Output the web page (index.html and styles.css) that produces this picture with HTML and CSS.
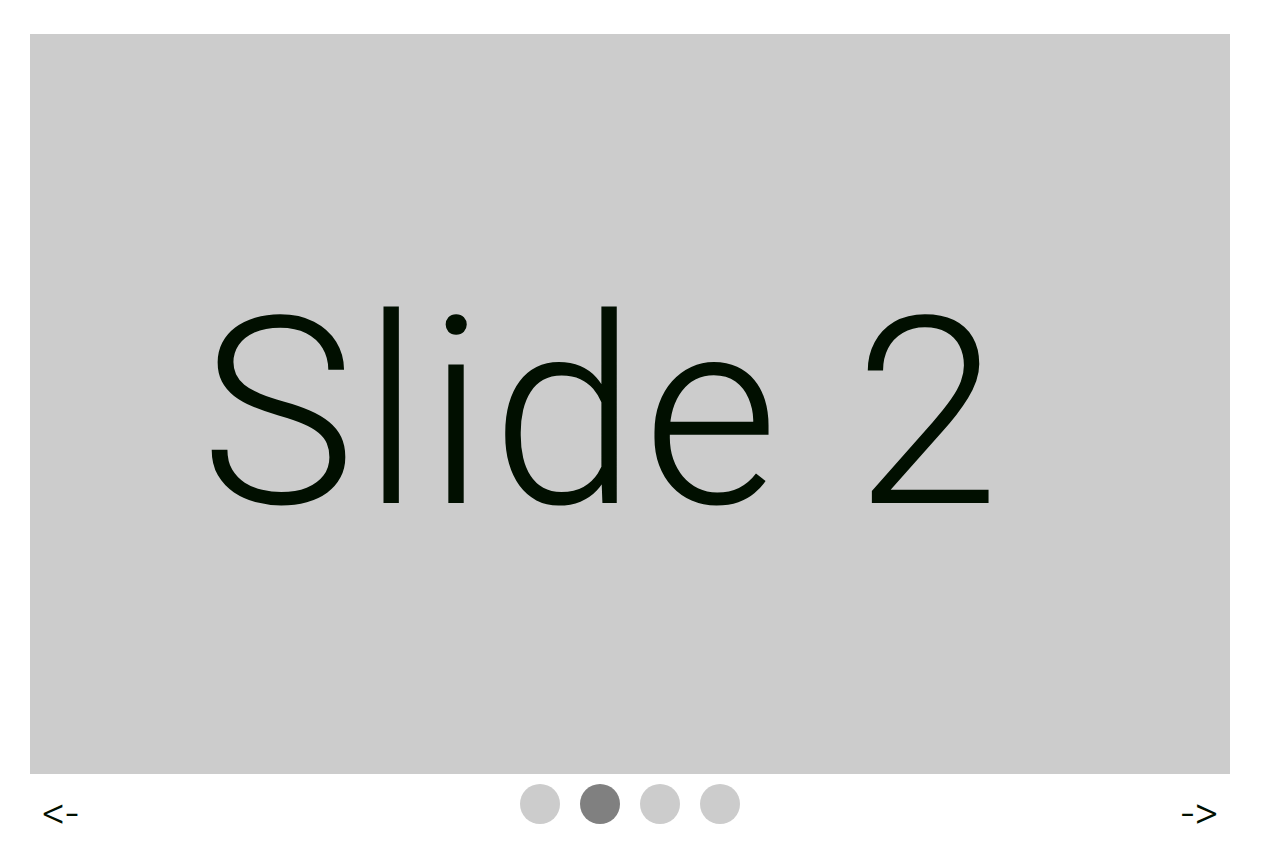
FILE: index.html
```html
<!DOCTYPE html>
<html>
<head>
<meta charset="utf-8">
<link rel="stylesheet" href="styles.css">
</head>
<body>
<div class="carousel">
  <div class="slide"><span class="slide-text">Slide 2</span></div>
  <div class="controls">
    <span class="arrow">&lt;-</span>
    <div class="dots">
      <span class="dot"></span>
      <span class="dot active"></span>
      <span class="dot"></span>
      <span class="dot"></span>
    </div>
    <span class="arrow arrow-next">-&gt;</span>
  </div>
</div>
</body>
</html>
```
FILE: styles.css
```css
html, body {
  margin: 0;
  padding: 0;
  background: #fff;
}
body {
  font-family: Roboto, sans-serif;
}
.carousel {
  width: 1200px;
  margin: 34px 0 0 30px;
}
.slide {
  height: 740px;
  background: #cccccc;
  display: flex;
  align-items: center;
  justify-content: center;
  padding: 20px 54px 0 0;
  box-sizing: border-box;
}
.slide-text {
  font-family: Roboto, sans-serif;
  font-weight: 300;
  font-size: 262px;
  letter-spacing: 6px;
  color: #010f00;
  line-height: 1;
}
.controls {
  display: flex;
  align-items: flex-start;
  justify-content: space-between;
  padding: 10px 12px 0 12px;
}
.arrow {
  font-family: Roboto, sans-serif;
  font-weight: 300;
  font-size: 46px;
  line-height: 40px;
  margin-top: 9px;
  color: #010f00;
  width: 60px;
}
.arrow-next {
  text-align: right;
}
.dots {
  display: flex;
  gap: 20px;
}
.dot {
  width: 40px;
  height: 40px;
  border-radius: 50%;
  background: #cccccc;
}
.dot.active {
  background: #808080;
}
```
